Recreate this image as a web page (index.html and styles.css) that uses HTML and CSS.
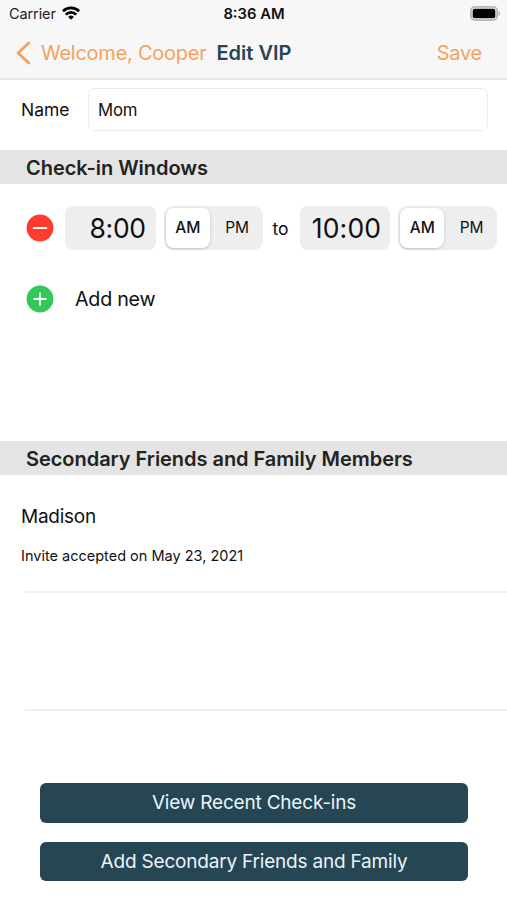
FILE: index.html
```html
<!DOCTYPE html>
<html lang="en">
<head>
    <meta charset="UTF-8">
    <meta name="viewport" content="width=device-width, initial-scale=1.0">
    <title>Edit VIP</title>
    <link rel="stylesheet" href="styles.css">
</head>
<body>
    <header class="top">
        <div class="status-bar">
            <div class="carrier">
                <span>Carrier</span>
                <svg width="18" height="14" viewBox="0 0 18 14" fill="none" stroke="#000" stroke-width="2.7">
                    <path d="M0.9 5.2a11.5 11.5 0 0 1 16.2 0"/>
                    <path d="M3.8 8.6a7.4 7.4 0 0 1 10.4 0"/>
                    <path d="M9 13.7L6.2 10.9a4 4 0 0 1 5.6 0z" fill="#000" stroke="none"/>
                </svg>
            </div>
            <span class="clock">8:36 AM</span>
            <svg class="battery" width="31" height="15" viewBox="0 0 31 15">
                <rect x="0.9" y="0.9" width="26.2" height="13.2" rx="4" fill="#f7f7f7" stroke="#b5b5b5" stroke-width="1.8"/>
                <rect x="2.7" y="2.7" width="22.6" height="9.6" rx="2" fill="#000"/>
                <path d="M28.5 5.2c2.2 0.8 2.2 3.8 0 4.6z" fill="#b5b5b5"/>
            </svg>
        </div>
        <nav class="nav-bar">
            <a class="back" href="#">
                <svg width="16" height="24" viewBox="0 0 16 24" fill="none" stroke="#f4a261" stroke-width="2.8" stroke-linecap="round" stroke-linejoin="round">
                    <path d="M13.8 2L3 12l10.8 10"/>
                </svg>
                <span>Welcome, Cooper</span>
            </a>
            <h1>Edit VIP</h1>
            <a class="save" href="#">Save</a>
        </nav>
    </header>

    <div class="name-row">
        <label for="name">Name</label>
        <input type="text" id="name" value="Mom">
    </div>

    <h2>Check-in Windows</h2>
    <div class="windows">
        <div class="window-row">
            <svg class="round-icon" width="28" height="28" viewBox="0 0 28 28">
                <circle cx="14" cy="14" r="13.4" fill="#ff3b30"/>
                <path d="M7.8 14h12.6" stroke="#fff" stroke-width="1.8" stroke-linecap="round"/>
            </svg>
            <div class="time">8:00</div>
            <div class="segment">
                <span class="active">AM</span>
                <span>PM</span>
            </div>
            <span class="to">to</span>
            <div class="time end">10:00</div>
            <div class="segment">
                <span class="active">AM</span>
                <span>PM</span>
            </div>
        </div>
        <div class="add-row">
            <svg class="round-icon" width="28" height="28" viewBox="0 0 28 28">
                <circle cx="14" cy="14" r="13.4" fill="#34c759"/>
                <path d="M8.2 14h11.6M14 8.2v11.6" stroke="#fff" stroke-width="1.8" stroke-linecap="round"/>
            </svg>
            <span>Add new</span>
        </div>
    </div>

    <h2 class="members-title">Secondary Friends and Family Members</h2>
    <ul class="members">
        <li>
            <div class="member-name">Madison</div>
            <div class="member-status">Invite accepted on May 23, 2021</div>
        </li>
        <li></li>
    </ul>

    <div class="actions">
        <button class="recent">View Recent Check-ins</button>
        <button class="add">Add Secondary Friends and Family</button>
    </div>
</body>
</html>
```

FILE: styles.css
```css
* {
  box-sizing: border-box;
  margin: 0;
  padding: 0;
}

body {
  width: 507px;
  height: 900px;
  overflow: hidden;
  font-family: Inter, 'Liberation Sans', sans-serif;
  background-color: #fff;
  color: #111;
}

a {
  color: #f4a261;
  text-decoration: none;
}

.top {
  height: 80px;
  background-color: #f7f7f7;
  border-bottom: 2px solid #e6e6e6;
}

.status-bar {
  display: grid;
  grid-template-columns: 1fr auto 1fr;
  align-items: center;
  height: 27px;
  padding: 0 6px 0 9px;
}

.carrier {
  display: flex;
  align-items: center;
  gap: 6px;
  font-size: 14.5px;
  letter-spacing: -0.1px;
  color: #222;
}

.carrier svg {
  margin-top: -2px;
}

.clock {
  margin-right: 2px;
  font-size: 14.8px;
  font-weight: 600;
}

.battery {
  justify-self: end;
}

.nav-bar {
  display: flex;
  align-items: center;
  height: 51px;
  padding: 0 25px 0 15px;
  font-size: 20px;
  letter-spacing: -0.25px;
}

.back {
  display: flex;
  align-items: center;
  gap: 10px;
}

h1 {
  margin-left: 10px;
  font-size: 20px;
  font-weight: 600;
  letter-spacing: 0;
  color: #264653;
}

.save {
  margin-left: auto;
}

.name-row {
  display: flex;
  align-items: center;
  height: 70px;
  padding: 0 19px 11px 21px;
  font-size: 17.5px;
}

.name-row label {
  width: 67px;
}

.name-row input {
  flex: 1;
  height: 43px;
  padding: 0 9px;
  border: 1px solid #ebebeb;
  border-radius: 7px;
  font: inherit;
  font-size: 16.8px;
  letter-spacing: -0.2px;
  color: #111;
  outline: none;
}

h2 {
  height: 34px;
  padding-left: 26px;
  line-height: 36px;
  font-size: 20px;
  font-weight: 600;
  letter-spacing: -0.04px;
  background-color: #e4e4e4;
  color: #222;
  white-space: nowrap;
}

.windows {
  height: 257px;
  padding: 22px 10px 0 26px;
}

.window-row {
  display: flex;
  align-items: center;
  height: 44px;
}

.round-icon {
  flex: none;
}

.time {
  width: 91px;
  height: 44px;
  margin-left: 11px;
  padding-right: 10px;
  border-radius: 8px;
  background-color: #eee;
  font-size: 26.5px;
  line-height: 44px;
  letter-spacing: -0.3px;
  text-align: right;
}

.time.end {
  padding-right: 9px;
  letter-spacing: 0.2px;
}

.segment {
  display: flex;
  width: 99px;
  height: 44px;
  margin-left: 8px;
  padding: 2px;
  border-radius: 9px;
  background-color: #eee;
  font-size: 15.5px;
  line-height: 40px;
  text-align: center;
}

.segment span {
  flex: 1;
  padding-left: 4px;
}

.segment .active {
  flex: 0 0 44px;
  padding: 0;
  border-radius: 8px;
  background-color: #fff;
  box-shadow: 0 1px 3px rgba(0, 0, 0, 0.2);
  font-weight: 500;
}

.to {
  width: 26px;
  padding-left: 10px;
  font-size: 17.5px;
}

.add-row {
  display: flex;
  align-items: center;
  gap: 21px;
  margin-top: 35px;
  font-size: 19.7px;
  letter-spacing: -0.25px;
}

.members {
  list-style: none;
}

.members li {
  height: 118px;
  margin-left: 25px;
  border-bottom: 2px solid #efefef;
}

.member-name {
  margin-left: -4px;
  padding-top: 30px;
  font-size: 19px;
  line-height: 24px;
  letter-spacing: -0.25px;
}

.member-status {
  margin: 17px 0 0 -4px;
  font-size: 14.5px;
  line-height: 20px;
}

.actions {
  display: flex;
  flex-direction: column;
  gap: 19px;
  padding: 72px 39px 0 40px;
}

button {
  height: 39.5px;
  border: none;
  border-radius: 6px;
  background-color: #264653;
  color: #e9f5fa;
  font-family: inherit;
  font-size: 19px;
  letter-spacing: -0.2px;
}
```
